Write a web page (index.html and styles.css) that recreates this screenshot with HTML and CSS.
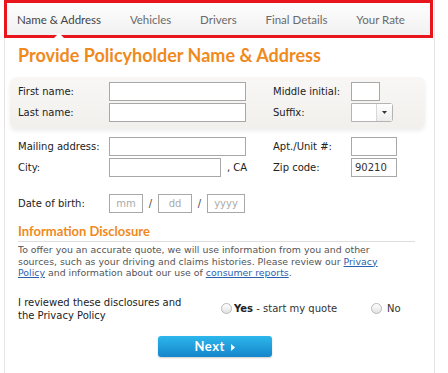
FILE: index.html
```html
<!DOCTYPE html>
<html lang="en">
<head>
  <meta charset="UTF-8" />
  <meta name="viewport" content="width=device-width, initial-scale=1.0" />
  <title>Get a Quote</title>
  <link rel="stylesheet" href="styles.css">
</head>
<body>
  <div class="card">
    <nav class="steps">
      <span class="step active">Name &amp; Address</span>
      <span class="step">Vehicles</span>
      <span class="step">Drivers</span>
      <span class="step">Final Details</span>
      <span class="step">Your Rate</span>
    </nav>

    <h1 class="title">Provide Policyholder Name &amp; Address</h1>

    <div class="group shaded">
      <div class="row">
        <label class="lbl">First name:</label>
        <div class="cell"><input class="field wide" type="text"></div>
        <label class="lbl">Middle initial:</label>
        <div class="cell"><input class="field mi" type="text"></div>
      </div>
      <div class="row">
        <label class="lbl">Last name:</label>
        <div class="cell"><input class="field wide" type="text"></div>
        <label class="lbl">Suffix:</label>
        <div class="cell">
          <div class="select">
            <span class="select-val"></span>
            <span class="select-btn"><svg width="5" height="3" viewBox="0 0 5 3"><path d="M0 0h5L2.5 3z" fill="#333"/></svg></span>
          </div>
        </div>
      </div>
    </div>

    <div class="group">
      <div class="row">
        <label class="lbl">Mailing address:</label>
        <div class="cell"><input class="field wide" type="text"></div>
        <label class="lbl">Apt./Unit #:</label>
        <div class="cell"><input class="field short" type="text"></div>
      </div>
      <div class="row">
        <label class="lbl">City:</label>
        <div class="cell"><input class="field city" type="text"><span class="state">, CA</span></div>
        <label class="lbl">Zip code:</label>
        <div class="cell"><input class="field short" type="text" value="90210"></div>
      </div>
    </div>

    <div class="group dob">
      <div class="row">
        <label class="lbl">Date of birth:</label>
        <div class="cell date">
          <input class="field dd-mm" type="text" placeholder="mm">
          <span class="slash">/</span>
          <input class="field dd-mm" type="text" placeholder="dd">
          <span class="slash">/</span>
          <input class="field yyyy" type="text" placeholder="yyyy">
        </div>
      </div>
    </div>

    <h2 class="subtitle">Information Disclosure</h2>
    <p class="disclosure">To offer you an accurate quote, we will use information from you and other sources, such as your driving and claims histories. Please review our <a href="#">Privacy Policy</a> and information about our use of <a href="#">consumer reports</a>.</p>

    <div class="consent">
      <p class="consent-text">I reviewed these disclosures and the Privacy Policy</p>
      <label class="opt yes"><span class="radio"></span><b>Yes</b>&nbsp;- start my quote</label>
      <label class="opt no"><span class="radio"></span>No</label>
    </div>

    <div class="actions">
      <button class="next">Next <svg width="4" height="7" viewBox="0 0 4 7"><path d="M0 0l4 3.5L0 7z" fill="#fff"/></svg></button>
    </div>
  </div>
</body>
</html>
```

FILE: styles.css
```css
body {
  margin: 0;
  background: #fff;
  font-family: "DejaVu Sans", Verdana, sans-serif;
  font-size: 10px;
  color: #222;
}
.card {
  margin-left: 4px;
  width: 429px;
  min-height: 400px;
  border: 1px solid #e4e4e4;
  border-top: 0;
}
.steps {
  position: relative;
  margin-left: -1px;
  height: 32px;
  border: 3px solid #e8151d;
  background: linear-gradient(#fdfdfd, #f1f1f1);
  display: flex;
  align-items: center;
  justify-content: space-between;
  padding: 0 25px 0 10px;
  box-sizing: content-box;
  width: 388px;
  font-family: Lato, "Open Sans", sans-serif;
  font-size: 11.5px;
  color: #6a6a6a;
}
.step.active {
  color: #444;
  position: relative;
}
.step.active::after {
  content: "";
  position: absolute;
  left: 50%;
  bottom: -12px;
  margin-left: -5px;
  border: 5px solid transparent;
  border-bottom-color: #fff;
}
.title {
  margin: 5px 0 0 13px;
  height: 24px;
  line-height: 24px;
  font-family: Lato, "Open Sans", sans-serif;
  font-size: 18px;
  font-weight: bold;
  color: #f08a1d;
}
.group {
  margin: 0 9px 0 5px;
  padding: 0 8px;
}
.shaded {
  margin-top: 10px;
  padding-top: 5px;
  padding-bottom: 6px;
  border-radius: 6px;
  background: linear-gradient(#f8f7f5, #f2f0ed);
  box-shadow: 0 3px 4px rgba(0, 0, 0, 0.07);
}
.group + .group {
  margin-top: 9px;
}
.dob {
  margin-top: 17px !important;
}
.row {
  display: grid;
  grid-template-columns: 91px 164px 78px auto;
  align-items: center;
  height: 19px;
}
.row + .row {
  margin-top: 2px;
}
.cell {
  display: flex;
  align-items: center;
}
.field {
  box-sizing: border-box;
  height: 19px;
  margin: 0;
  padding: 0 3px;
  border: 1px solid #a8a8a8;
  background: #fff;
  font-family: "DejaVu Sans", Verdana, sans-serif;
  font-size: 10px;
  color: #333;
}
.field::placeholder {
  color: #aaa;
}
.wide { width: 137px; }
.city { width: 112px; }
.mi { width: 29px; }
.short { width: 46px; }
.state {
  margin-left: 6px;
}
.select {
  display: flex;
  width: 42px;
  height: 19px;
  box-sizing: border-box;
  border: 1px solid #b4b4b4;
  border-radius: 0 3px 3px 0;
  background: #fff;
}
.select-val {
  flex: 1;
}
.select-btn {
  width: 15px;
  border-left: 1px solid #d8d8d8;
  background: linear-gradient(#fff, #ececec);
  display: flex;
  align-items: center;
  justify-content: center;
}
.date {
  grid-column: 2 / 5;
}
.dd-mm {
  width: 34px;
  text-align: center;
}
.yyyy {
  width: 38px;
  text-align: center;
}
.slash {
  width: 15px;
  text-align: center;
  color: #444;
}
.subtitle {
  margin: 10px 0 0 13px;
  padding-bottom: 2px;
  width: 397px;
  border-bottom: 1px solid #dedede;
  font-family: Lato, "Open Sans", sans-serif;
  font-size: 13px;
  font-weight: bold;
  line-height: 16px;
  color: #f08a1d;
}
.disclosure {
  margin: 2px 0 0 13px;
  width: 380px;
  font-size: 9.4px;
  line-height: 11.6px;
  color: #555;
}
.disclosure a {
  color: #2b5fae;
}
.consent {
  display: flex;
  align-items: center;
  margin: 17px 0 0 13px;
}
.consent-text {
  margin: 0;
  width: 178px;
  line-height: 13px;
  color: #222;
}
.opt {
  display: flex;
  align-items: center;
  color: #333;
}
.yes {
  margin-left: 25px;
  width: 150px;
}
.yes b {
  color: #222;
}
.radio {
  display: inline-block;
  width: 9px;
  height: 9px;
  margin-right: 2px;
  border: 1px solid #b8b8b8;
  border-radius: 50%;
  background: linear-gradient(#fff, #e2e2e2);
}
.no .radio {
  margin-right: 5px;
}
.actions {
  margin-top: 14px;
  padding-left: 153px;
}
.next {
  width: 114px;
  height: 21px;
  border: 0;
  border-radius: 3px;
  background: linear-gradient(#2db7ec, #1585cb);
  box-shadow: 0 1px 2px rgba(0, 0, 0, 0.2);
  color: #fff;
  font-family: Lato, "Open Sans", sans-serif;
  font-size: 13px;
  font-weight: bold;
  letter-spacing: 0.5px;
  cursor: pointer;
}
.next svg {
  margin-left: 3px;
}
```
